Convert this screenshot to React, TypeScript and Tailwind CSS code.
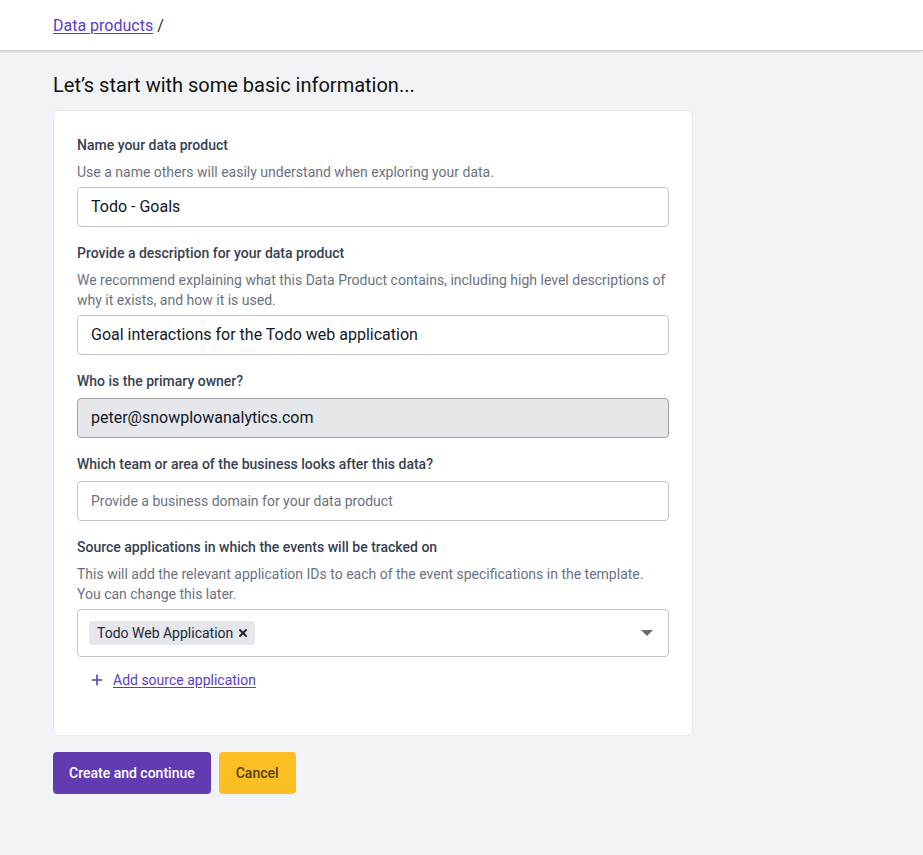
import { Plus, X } from "lucide-react";

type FieldProps = {
  label: string;
  hint?: React.ReactNode;
  children: React.ReactNode;
};

function Field({ label, hint, children }: FieldProps) {
  return (
    <div className="mb-4">
      <div className="text-sm leading-5 font-medium text-[#374151]">{label}</div>
      {hint ? (
        <div className="mt-[7px] mb-[5px] text-sm leading-5 text-[#6b7280]">{hint}</div>
      ) : (
        <div className="h-[7px]" />
      )}
      {children}
    </div>
  );
}

export default function App() {
  return (
    <div className="min-h-[855px] bg-[#f2f3f7] font-['Roboto',sans-serif] text-[#111827]">
      <header className="h-[51px] bg-white border-b border-[#d4d4d8] shadow-[0_1px_2px_rgba(0,0,0,0.12)] flex items-center px-[53px] pt-[2px]">
        <a href="#" className="text-base text-[#5b3cc4] underline underline-offset-2">
          Data products
        </a>
        <span className="ml-1 text-base text-[#1f2937]">/</span>
      </header>

      <main className="px-[53px] pt-[21px]">
        <h1 className="text-xl leading-[26px] text-[#111] mb-[12px]">
          Let’s start with some basic information...
        </h1>

        <div className="w-[640px] bg-white rounded-md border border-[#e5e7eb] px-[23px] pt-6 pb-[45px]">
          <Field label="Name your data product" hint="Use a name others will easily understand when exploring your data.">
            <div className="h-10 rounded border border-[#c4c4c4] flex items-center px-[13px] text-base">
              Todo - Goals
            </div>
          </Field>

          <Field
            label="Provide a description for your data product"
            hint="We recommend explaining what this Data Product contains, including high level descriptions of why it exists, and how it is used."
          >
            <div className="h-10 rounded border border-[#c4c4c4] flex items-center px-[13px] text-base">
              Goal interactions for the Todo web application
            </div>
          </Field>

          <Field label="Who is the primary owner?">
            <div className="h-10 rounded border border-[#a3a3a3] bg-[#e5e7eb] flex items-center px-[13px] text-base">
              peter@snowplowanalytics.com
            </div>
          </Field>

          <Field label="Which team or area of the business looks after this data?">
            <div className="h-10 rounded border border-[#c4c4c4] flex items-center px-[13px] text-sm text-[#6b7280]">
              Provide a business domain for your data product
            </div>
          </Field>

          <Field
            label="Source applications in which the events will be tracked on"
            hint="This will add the relevant application IDs to each of the event specifications in the template. You can change this later."
          >
            <div className="h-12 rounded border border-[#c4c4c4] flex items-center pl-[11px] pr-[15px]">
              <span className="h-6 rounded bg-[#e5e7eb] flex items-center pl-2 pr-[6px] text-sm text-[#1f2937]">
                Todo Web Application
                <X className="w-3 h-3 ml-1" strokeWidth={4} />
              </span>
              <span className="ml-auto w-0 h-0 border-l-[6px] border-r-[6px] border-t-[6px] border-l-transparent border-r-transparent border-t-[#6b6b6b]" />
            </div>
          </Field>

          <div className="h-5 flex items-center pl-3 -mt-[3px]">
            <Plus className="w-4 h-4 text-[#5b3cc4]" strokeWidth={2.5} />
            <a href="#" className="ml-[8px] text-sm leading-5 text-[#5b3cc4] underline underline-offset-2">
              Add source application
            </a>
          </div>
        </div>

        <div className="flex gap-2 mt-4">
          <button className="h-[42px] px-4 rounded bg-[#613cb0] text-white text-sm font-medium">
            Create and continue
          </button>
          <button className="h-[42px] px-[17px] rounded bg-[#fbbf24] text-[#5c3b0a] text-sm font-medium">
            Cancel
          </button>
        </div>
      </main>
    </div>
  );
}
